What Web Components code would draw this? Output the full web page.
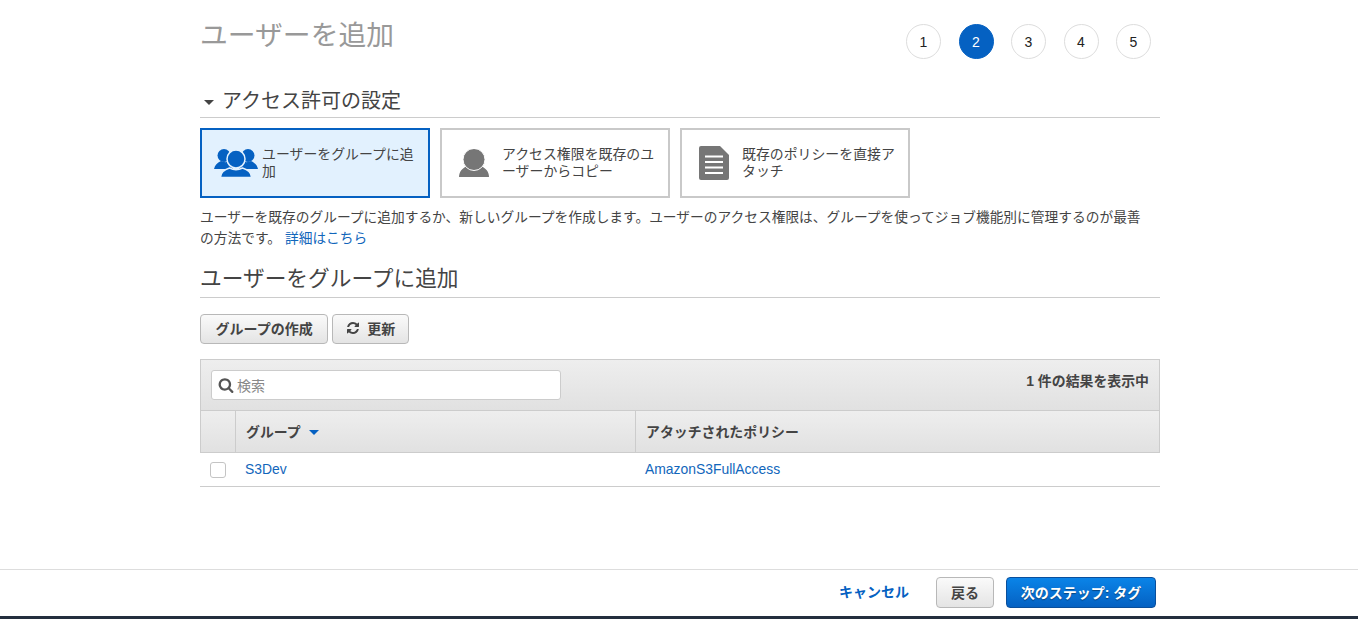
<!DOCTYPE html>
<html lang="ja">
<head>
<meta charset="utf-8">
<title>ユーザーを追加</title>
<style>
  html, body { margin: 0; padding: 0; background: #fff; }
  body { font-family: "Liberation Sans", "Noto Sans CJK JP", sans-serif; color: #444; overflow: hidden; }
</style>
</head>
<body>
<add-user-page></add-user-page>

<script>
const ICONS = {
  group: `<svg width="48" height="28" viewBox="-4 0 48 28">
    <g fill="currentColor">
      <circle cx="10" cy="6.5" r="6.5"/><circle cx="34" cy="6.5" r="6.5"/>
      <path d="M0 20c1-4 3-6 7-8 3 1.5 6 1.5 8 0l4 8z"/>
      <path d="M44 20c-1-4-3-6-7-8-3 1.5-6 1.5-8 0l-4 8z"/>
    </g>
    <path d="M6.5 28.5c0-5 4-8 9-9.5 4 2 9 2 13 0 5 1.5 9 4.5 9 9.5z" fill="currentColor" stroke="var(--icon-gap)" stroke-width="1.5"/>
    <circle cx="22" cy="10" r="9" fill="currentColor" stroke="var(--icon-gap)" stroke-width="1.5"/>
  </svg>`,
  user: `<svg width="30" height="28" viewBox="0 0 30 28">
    <path d="M0 28c0-5 3-9 9-11.5 4 2 8 2 12 0 6 2.500 9 6.500 9 11.500z" fill="currentColor"/>
    <circle cx="15" cy="10.500" r="11" fill="currentColor" stroke="var(--icon-gap)" stroke-width="1"/>
  </svg>`,
  doc: `<svg width="30" height="34" viewBox="0 0 30 34">
    <path d="M2 0h19l9 9v23a2 2 0 0 1-2 2H2a2 2 0 0 1-2-2V2a2 2 0 0 1 2-2z" fill="currentColor"/>
    <path d="M6 10.500h18M6 16h18M6 21.500h18M6 27h18" stroke="#fff" stroke-width="2"/>
  </svg>`,
  refresh: `<svg width="14" height="14" viewBox="0 0 1792 1792"><path fill="currentColor" d="M1639 1056q0 5-1 7-64 268-268 434.5t-478 166.5q-146 0-282.5-55t-243.5-157l-129 129q-19 19-45 19t-45-19-19-45v-448q0-26 19-45t45-19h448q26 0 45 19t19 45-19 45l-137 137q71 66 161 102t187 36q134 0 250-65t186-179q11-17 53-117 8-23 30-23h192q13 0 22.5 9.5t9.5 22.5zm25-800v448q0 26-19 45t-45 19h-448q-26 0-45-19t-19-45 19-45l138-138q-148-137-349-137-134 0-250 65t-186 179q-11 17-53 117-8 23-30 23h-199q-13 0-22.5-9.5t-9.5-22.5v-7q65-268 270-434.5t480-166.5q146 0 284 55.5t245 156.5l130-129q19-19 45-19t45 19 19 45z"/></svg>`,
  search: `<svg width="16" height="16" viewBox="0 0 1792 1792"><path fill="currentColor" d="M1216 832q0-185-131.5-316.5t-316.5-131.5-316.5 131.5-131.5 316.5 131.5 316.5 316.5 131.5 316.5-131.5 131.5-316.5zm512 832q0 52-38 90t-90 38q-54 0-90-38l-343-342q-179 124-399 124-143 0-273.5-55.5t-225-150-150-225-55.5-273.5 55.5-273.5 150-225 225-150 273.5-55.5 273.5 55.5 225 150 150 225 55.5 273.5q0 220-124 399l343 343q37 37 37 90z"/></svg>`
};

class StepIndicator extends HTMLElement {
  constructor() {
    super();
    this.attachShadow({ mode: 'open' });
  }

  connectedCallback() {
    const current = Number(this.getAttribute('current'));
    const steps = [1, 2, 3, 4, 5];
    this.shadowRoot.innerHTML = `
      <style>
        :host { display: flex; gap: 17px; }
        .step {
          width: 35px;
          height: 35px;
          box-sizing: border-box;
          border: 1px solid #ddd;
          border-radius: 50%;
          display: flex;
          justify-content: center;
          align-items: center;
          font-size: 14px;
          color: #222;
          background: #fff;
        }
        .step:nth-child(n+3) { margin-left: .5px; }
        .current { background: #0561c2; border-color: #0561c2; color: #fff; }
      </style>
      ${steps.map(n => `<div class="step ${n === current ? 'current' : ''}">${n}</div>`).join('')}
    `;
  }
}
customElements.define('step-indicator', StepIndicator);

class SectionHeading extends HTMLElement {
  constructor() {
    super();
    this.attachShadow({ mode: 'open' });
    this.shadowRoot.innerHTML = `
      <style>
        :host {
          display: flex;
          align-items: center;
          box-sizing: border-box;
          border-bottom: 1px solid #ccc;
          color: #444;
          font-size: var(--heading-size, 20px);
          line-height: 30px;
          height: 35px;
          padding-bottom: 3px;
        }
        .caret {
          display: none;
          width: 0;
          height: 0;
          border-left: 5px solid transparent;
          border-right: 5px solid transparent;
          border-top: 5px solid #444;
          margin: 3px 8px 0 4px;
        }
        :host([caret]) { padding-bottom: 0; padding-top: 1px; }
        :host([caret]) .caret { display: block; }
      </style>
      <span class="caret"></span><slot></slot>
    `;
  }
}
customElements.define('section-heading', SectionHeading);

class OptionCard extends HTMLElement {
  constructor() {
    super();
    this.attachShadow({ mode: 'open' });
  }

  connectedCallback() {
    this.shadowRoot.innerHTML = `
      <style>
        :host {
          display: flex;
          align-items: center;
          box-sizing: border-box;
          width: 230px;
          height: 70px;
          border: 2px solid #c9c9c9;
          background: #fff;
          color: #444;
          font-size: 13.9px;
          line-height: 17px;
          --icon-gap: #fff;
        }
        :host([selected]) {
          border-color: #0561c2;
          background: #e2f1fe;
          --icon-gap: #e2f1fe;
        }
        .icon {
          flex: none;
          box-sizing: border-box;
          width: 60px;
          padding-left: 4px;
          display: flex;
          justify-content: center;
          color: #767676;
        }
        svg { display: block; }
        :host([selected]) .icon { color: #0561c2; }
        .label { flex: 1; padding-right: 10px; }
      </style>
      <div class="icon">${ICONS[this.getAttribute('icon')]}</div>
      <div class="label"><slot></slot></div>
    `;
  }
}
customElements.define('option-card', OptionCard);

class AwsButton extends HTMLElement {
  constructor() {
    super();
    this.attachShadow({ mode: 'open' });
    this.shadowRoot.innerHTML = `
      <style>
        :host {
          display: inline-flex;
          align-items: center;
          justify-content: center;
          gap: 7px;
          box-sizing: border-box;
          height: 30px;
          padding: 0 14.5px 2px;
          border: 1px solid #b8b8b8;
          border-radius: 4px;
          background: linear-gradient(#fafafa, #e4e4e4);
          color: #444;
          font-size: 14px;
          font-weight: bold;
          white-space: nowrap;
        }
        :host([primary]) {
          border-color: #0a4f9c;
          background: linear-gradient(#0a84e8, #0561c2);
          color: #fff;
          text-shadow: 0 1px 1px rgba(0,0,0,.4);
        }
        ::slotted(svg) { display: block; }
      </style>
      <slot></slot>
    `;
  }
}
customElements.define('aws-button', AwsButton);

class SearchBox extends HTMLElement {
  constructor() {
    super();
    this.attachShadow({ mode: 'open' });
    this.shadowRoot.innerHTML = `
      <style>
        :host {
          display: flex;
          align-items: center;
          box-sizing: border-box;
          width: 350px;
          height: 30px;
          padding: 0 0 1px 6px;
          gap: 3px;
          background: #fff;
          border: 1px solid #ccc;
          border-radius: 3px;
          color: #555;
          font-size: 14px;
        }
        .ph { color: #888; }
      </style>
      ${ICONS.search}<span class="ph">検索</span>
    `;
  }
}
customElements.define('search-box', SearchBox);

class GroupTable extends HTMLElement {
  constructor() {
    super();
    this.attachShadow({ mode: 'open' });
    this.shadowRoot.innerHTML = `
      <style>
        :host { display: block; font-size: 13.9px; color: #444; }
        a { color: #1166bb; text-decoration: none; }
        .toolbar {
          display: flex;
          justify-content: space-between;
          box-sizing: border-box;
          height: 52px;
          padding: 10px 10px 0;
          border: 1px solid #ccc;
          background: linear-gradient(#eeeeee, #e1e1e1);
        }
        .count { font-weight: bold; line-height: 20px; margin-top: 1px; color: #444; }
        .row {
          display: grid;
          grid-template-columns: 35px 400px 1fr;
          box-sizing: border-box;
        }
        .head {
          grid-template-columns: 34px 400px 1fr;
          height: 42px;
          border: 1px solid #ccc;
          border-top: 0;
          background: linear-gradient(#eeeeee, #e1e1e1);
          font-weight: bold;
        }
        .head > div {
          display: flex;
          align-items: center;
          padding: 0 0 2px 10px;
          border-left: 1px solid #ccc;
        }
        .head > div:first-child { border-left: 0; padding: 0; }
        .sort {
          width: 0;
          height: 0;
          margin: 3px 0 0 8px;
          border-left: 5.5px solid transparent;
          border-right: 5.5px solid transparent;
          border-top: 5px solid #0561c2;
        }
        .body {
          height: 34px;
          border-bottom: 1px solid #ccc;
          align-items: center;
        }
        .check { display: flex; padding-left: 10px; }
        .box {
          width: 16px;
          height: 16px;
          box-sizing: border-box;
          border: 1px solid #c4c4c4;
          border-radius: 3px;
          background: #fff;
        }
        .body > div:nth-child(n+2) { padding: 0 0 1px 10px; }
      </style>
      <div class="toolbar">
        <search-box></search-box>
        <div class="count">1 件の結果を表示中</div>
      </div>
      <div class="row head">
        <div></div>
        <div>グループ<span class="sort"></span></div>
        <div>アタッチされたポリシー</div>
      </div>
      <div class="row body">
        <div class="check"><div class="box"></div></div>
        <div><a href="#">S3Dev</a></div>
        <div><a href="#">AmazonS3FullAccess</a></div>
      </div>
    `;
  }
}
customElements.define('group-table', GroupTable);

class WizardFooter extends HTMLElement {
  constructor() {
    super();
    this.attachShadow({ mode: 'open' });
    this.shadowRoot.innerHTML = `
      <style>
        :host {
          display: flex;
          justify-content: flex-end;
          align-items: center;
          box-sizing: border-box;
          height: 50px;
          padding: 0 202px 1px 0;
          border-top: 1px solid #ddd;
          border-bottom: 3px solid #232f3e;
          background: #fff;
          font-size: 14px;
        }
        a { color: #0561c2; font-weight: bold; text-decoration: none; margin: 0 27px 3px 0; }
        aws-button { height: 31px; padding: 0 0 2px; }
        .back { width: 58px; margin-right: 12px; }
        .next { width: 150px; }
      </style>
      <a href="#">キャンセル</a>
      <aws-button class="back">戻る</aws-button>
      <aws-button class="next" primary>次のステップ: タグ</aws-button>
    `;
  }
}
customElements.define('wizard-footer', WizardFooter);

class AddUserPage extends HTMLElement {
  constructor() {
    super();
    this.attachShadow({ mode: 'open' });
    this.shadowRoot.innerHTML = `
      <style>
        :host {
          display: flex;
          flex-direction: column;
          height: 619px;
        }
        main {
          flex: 1;
          width: 960px;
          margin-left: 200px;
        }
        header {
          display: flex;
          justify-content: space-between;
          height: 83px;
        }
        h1 {
          margin: 16px 0 0;
          font-size: 27.8px;
          line-height: 40px;
          font-weight: normal;
          color: #999;
        }
        step-indicator { margin: 24px 9px 0 0; }
        .cards { display: flex; gap: 10px; margin-top: 10px; }
        p {
          margin: 9px 0 0;
          font-size: 13.72px;
          line-height: 21px;
          color: #444;
        }
        p a { color: #1166bb; text-decoration: none; margin-left: 4px; }
        .sub { --heading-size: 21.7px; margin-top: 14px; }
        .actions { display: flex; gap: 4px; margin: 16px 0 15px; }
        .refresh { padding: 0 13px 2px; }
      </style>
      <main>
        <header>
          <h1>ユーザーを追加</h1>
          <step-indicator current="2"></step-indicator>
        </header>
        <section-heading caret>アクセス許可の設定</section-heading>
        <div class="cards">
          <option-card icon="group" selected>ユーザーをグループに追加</option-card>
          <option-card icon="user">アクセス権限を既存のユーザーからコピー</option-card>
          <option-card icon="doc">既存のポリシーを直接アタッチ</option-card>
        </div>
        <p><span>ユーザーを既存のグループに追加するか、新しいグループを作成します。ユーザーのアクセス権限は、グループを使ってジョブ機能別に管理するのが最善</span><br><span>の方法です。</span><a href="#">詳細はこちら</a></p>
        <section-heading class="sub">ユーザーをグループに追加</section-heading>
        <div class="actions">
          <aws-button>グループの作成</aws-button>
          <aws-button class="refresh">${ICONS.refresh}更新</aws-button>
        </div>
        <group-table></group-table>
      </main>
      <wizard-footer></wizard-footer>
    `;
  }
}
customElements.define('add-user-page', AddUserPage);
</script>
</body>
</html>
